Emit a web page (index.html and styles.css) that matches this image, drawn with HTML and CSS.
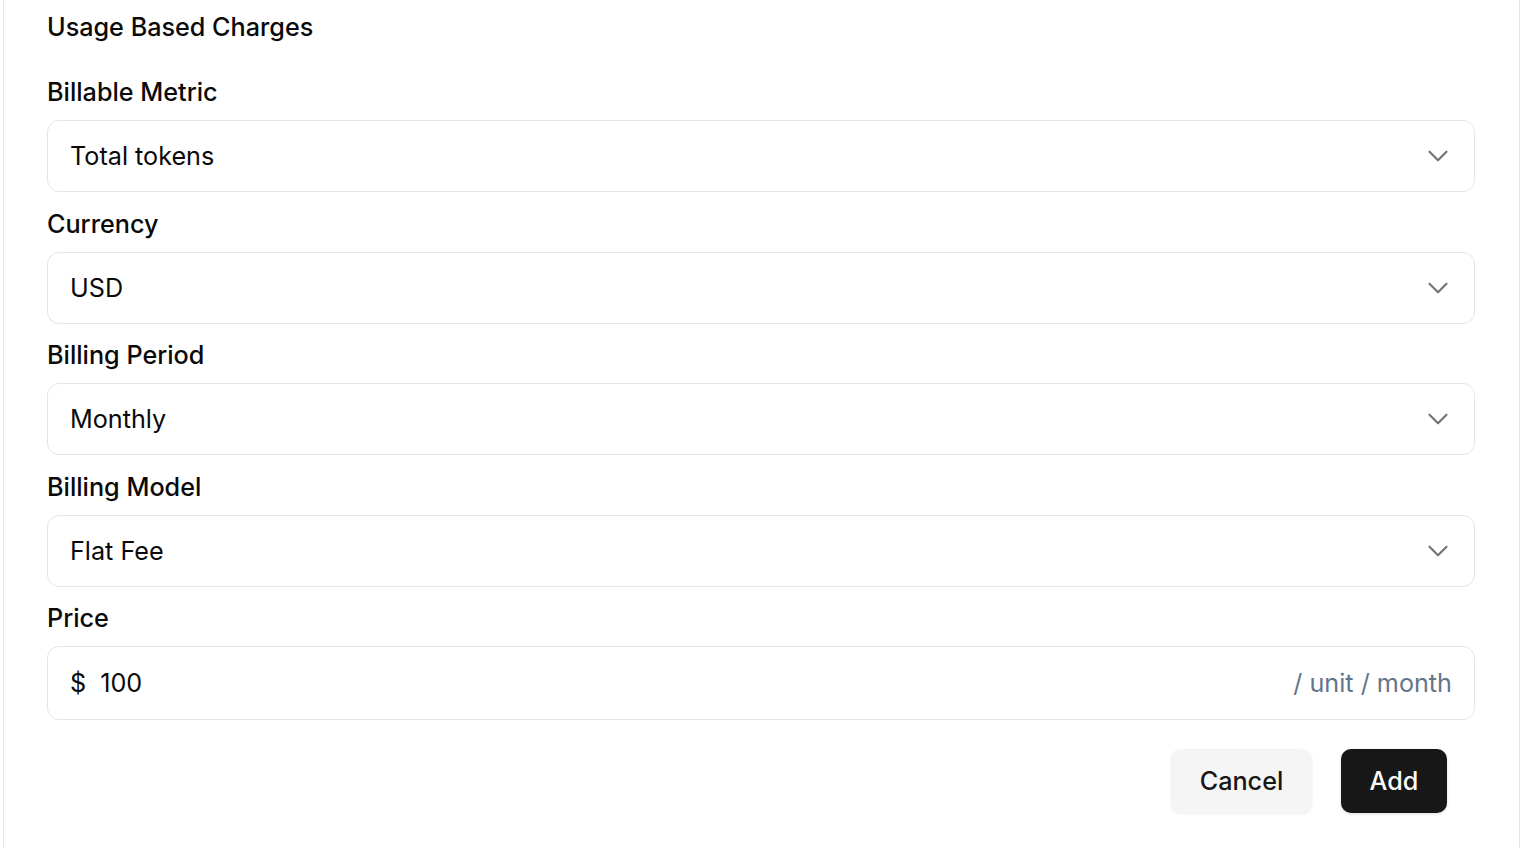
FILE: index.html
```html
<!DOCTYPE html>
<html>
<head>
<meta charset="utf-8">
<link rel="stylesheet" href="styles.css">
</head>
<body>
<div class="card">
  <h2 class="title">Usage Based Charges</h2>
  <div class="form">
    <div class="field">
      <label class="label">Billable Metric</label>
      <div class="select"><span>Total tokens</span><svg class="chev" viewBox="0 0 24 24"><path d="m6 9 6 6 6-6"/></svg></div>
    </div>
    <div class="field">
      <label class="label">Currency</label>
      <div class="select"><span>USD</span><svg class="chev" viewBox="0 0 24 24"><path d="m6 9 6 6 6-6"/></svg></div>
    </div>
    <div class="field">
      <label class="label">Billing Period</label>
      <div class="select"><span>Monthly</span><svg class="chev" viewBox="0 0 24 24"><path d="m6 9 6 6 6-6"/></svg></div>
    </div>
    <div class="field">
      <label class="label">Billing Model</label>
      <div class="select"><span>Flat Fee</span><svg class="chev" viewBox="0 0 24 24"><path d="m6 9 6 6 6-6"/></svg></div>
    </div>
    <div class="field">
      <label class="label">Price</label>
      <div class="price"><span class="cur">$</span><span class="amount">100</span><span class="suffix">/ unit / month</span></div>
    </div>
  </div>
  <div class="actions">
    <button class="btn cancel">Cancel</button>
    <button class="btn add">Add</button>
  </div>
</div>
</body>
</html>
```
FILE: styles.css
```css
html, body {
  margin: 0;
  padding: 0;
  background: #ffffff;
  font-family: Inter, "Liberation Sans", sans-serif;
  color: #0a0a0a;
}
.card {
  margin-left: 3px;
  width: 1517px;
  height: 848px;
  box-sizing: border-box;
  border-left: 1px solid #e5e5e5;
  border-right: 1px solid #e5e5e5;
  padding: 11px 44px 0 43px;
}
.title {
  margin: 0;
  font-size: 25.2px;
  line-height: 32px;
  font-weight: 500;
}
.form {
  display: flex;
  flex-direction: column;
  gap: 15.5px;
  margin-top: 33px;
}
.field {
  display: flex;
  flex-direction: column;
  gap: 12px;
}
.label {
  font-size: 25.2px;
  line-height: 32px;
  font-weight: 500;
}
.select, .price {
  height: 72px;
  box-sizing: border-box;
  border: 1px solid #e5e5e5;
  border-radius: 12px;
  display: flex;
  align-items: center;
  padding: 0 19px 0 22px;
  font-size: 25.2px;
  font-weight: 400;
}
.select span { flex: 1; }
.chev {
  width: 34px;
  height: 34px;
  fill: none;
  stroke: #737373;
  stroke-width: 1.5;
  stroke-linecap: round;
  stroke-linejoin: round;
}
.price {
  height: 74px;
  padding-right: 22px;
}
.cur { margin-right: 14px; }
.amount { flex: 1; }
.suffix { color: #64748b; }
.actions {
  display: flex;
  justify-content: flex-end;
  gap: 29px;
  margin-top: 29px;
  padding-right: 28px;
}
.btn {
  font-family: Inter, "Liberation Sans", sans-serif;
  font-size: 25.2px;
  font-weight: 500;
  height: 64px;
  border: none;
  border-radius: 10px;
  padding: 0;
  cursor: pointer;
}
.cancel {
  background: #f5f5f5;
  color: #171717;
  box-shadow: 0 1px 3px rgba(0,0,0,0.08);
  width: 141px;
}
.add {
  background: #171717;
  color: #fafafa;
  box-shadow: 0 1px 3px rgba(0,0,0,0.15);
  width: 106px;
}
```
